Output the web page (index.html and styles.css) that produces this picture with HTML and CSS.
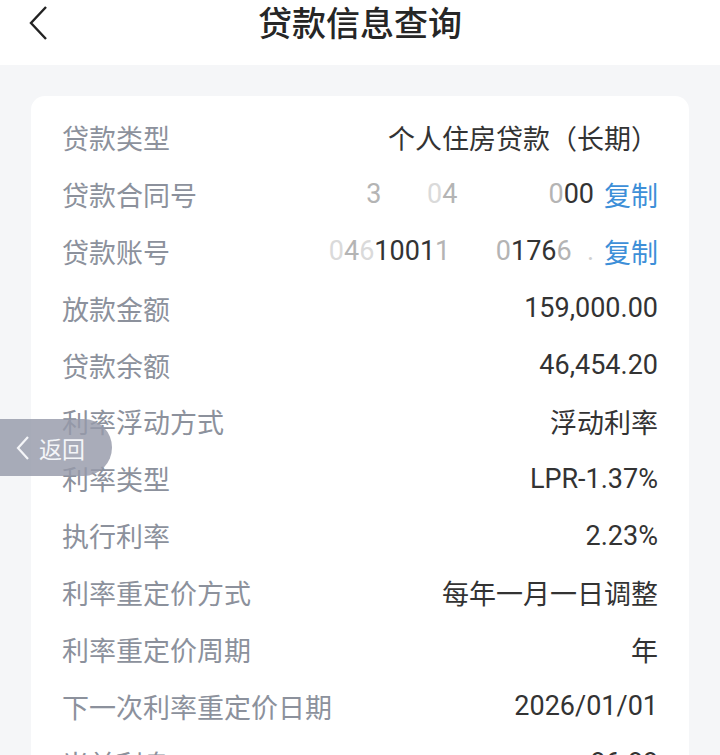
FILE: index.html
```html
<!DOCTYPE html>
<html lang="zh">
<head>
<meta charset="utf-8">
<link rel="stylesheet" href="styles.css">
</head>
<body>
<header class="header">
  <svg class="back" width="24" height="40" viewBox="0 0 24 40"><polyline points="19,4 4,20 19,36" fill="none" stroke="#222" stroke-width="2.4"/></svg>
  <h1 class="title">贷款信息查询</h1>
</header>
<main class="main">
  <section class="card">
    <div class="row"><span class="label">贷款类型</span><span class="value">个人住房贷款（长期）</span></div>
    <div class="row"><span class="label">贷款合同号</span><span class="value"><span class="num"><span class="fade">3</span><span class="hide">120</span><span class="fade2">0</span><span class="fade">4</span><span class="hide">567890</span><span class="fade">0</span>00</span><a class="copy">复制</a></span></div>
    <div class="row"><span class="label">贷款账号</span><span class="value"><span class="num"><span class="fade2">0</span><span class="fade">4</span><span class="fade2">6</span>1001<span class="fade">1</span><span class="hide">234</span><span class="fade">0</span>176<span class="fade">6</span><span class="hide">1</span><span class="fade3">.</span></span><a class="copy">复制</a></span></div>
    <div class="row"><span class="label">放款金额</span><span class="value">159,000.00</span></div>
    <div class="row"><span class="label">贷款余额</span><span class="value">46,454.20</span></div>
    <div class="row"><span class="label">利率浮动方式</span><span class="value">浮动利率</span></div>
    <div class="row"><span class="label">利率类型</span><span class="value">LPR-1.37%</span></div>
    <div class="row"><span class="label">执行利率</span><span class="value">2.23%</span></div>
    <div class="row"><span class="label">利率重定价方式</span><span class="value">每年一月一日调整</span></div>
    <div class="row"><span class="label">利率重定价周期</span><span class="value">年</span></div>
    <div class="row"><span class="label">下一次利率重定价日期</span><span class="value">2026/01/01</span></div>
    <div class="row"><span class="label">当前利息</span><span class="value">86.88</span></div>
  </section>
</main>
<div class="float-back">
  <svg width="16" height="28" viewBox="0 0 16 28"><polyline points="13,3 3,14 13,25" fill="none" stroke="#f4f5f8" stroke-width="2.2"/></svg>
  <span>返回</span>
</div>
</body>
</html>
```
FILE: styles.css
```css
* { box-sizing: border-box; }
html, body { margin: 0; padding: 0; }
body {
  background: #f5f6f8;
  font-family: Roboto, "Noto Sans CJK SC", sans-serif;
  width: 720px;
  height: 755px;
  overflow: hidden;
}
.header {
  background: #fff;
  height: 65px;
  position: relative;
  display: flex;
  justify-content: center;
}
.back {
  position: absolute;
  left: 27px;
  top: 3px;
}
.title {
  margin: 0;
  font-size: 34px;
  font-weight: 500;
  line-height: 44px;
  color: #262626;
  font-family: "Noto Sans CJK SC", sans-serif;
}
.main {
  padding: 31px 31px 0 31px;
}
.card {
  background: #fff;
  border-radius: 14px;
  padding: 13px 31px 0 31px;
}
.row {
  display: flex;
  justify-content: space-between;
  align-items: center;
  height: 56.9px;
  font-size: 27px;
}
.label {
  color: #8c919c;
  font-family: "Noto Sans CJK SC", sans-serif;
  font-weight: 400;
}
.value {
  color: #333;
  display: flex;
  align-items: center;
  gap: 10px;
}
.hide { color: transparent; }
.fade { color: #b4b4b4; }
.fade2 { color: #dadada; }
.fade3 { color: #d0d0d0; }
.copy {
  color: #3d8fd8;
  font-family: "Noto Sans CJK SC", sans-serif;
}
.float-back {
  position: absolute;
  left: 0;
  top: 419px;
  width: 112px;
  height: 57px;
  border-radius: 0 29px 29px 0;
  background: rgba(150, 154, 170, 0.82);
  display: flex;
  align-items: center;
  gap: 8px;
  padding-left: 15px;
  color: #f4f5f8;
  font-size: 23px;
  font-family: "Noto Sans CJK SC", sans-serif;
}
```
